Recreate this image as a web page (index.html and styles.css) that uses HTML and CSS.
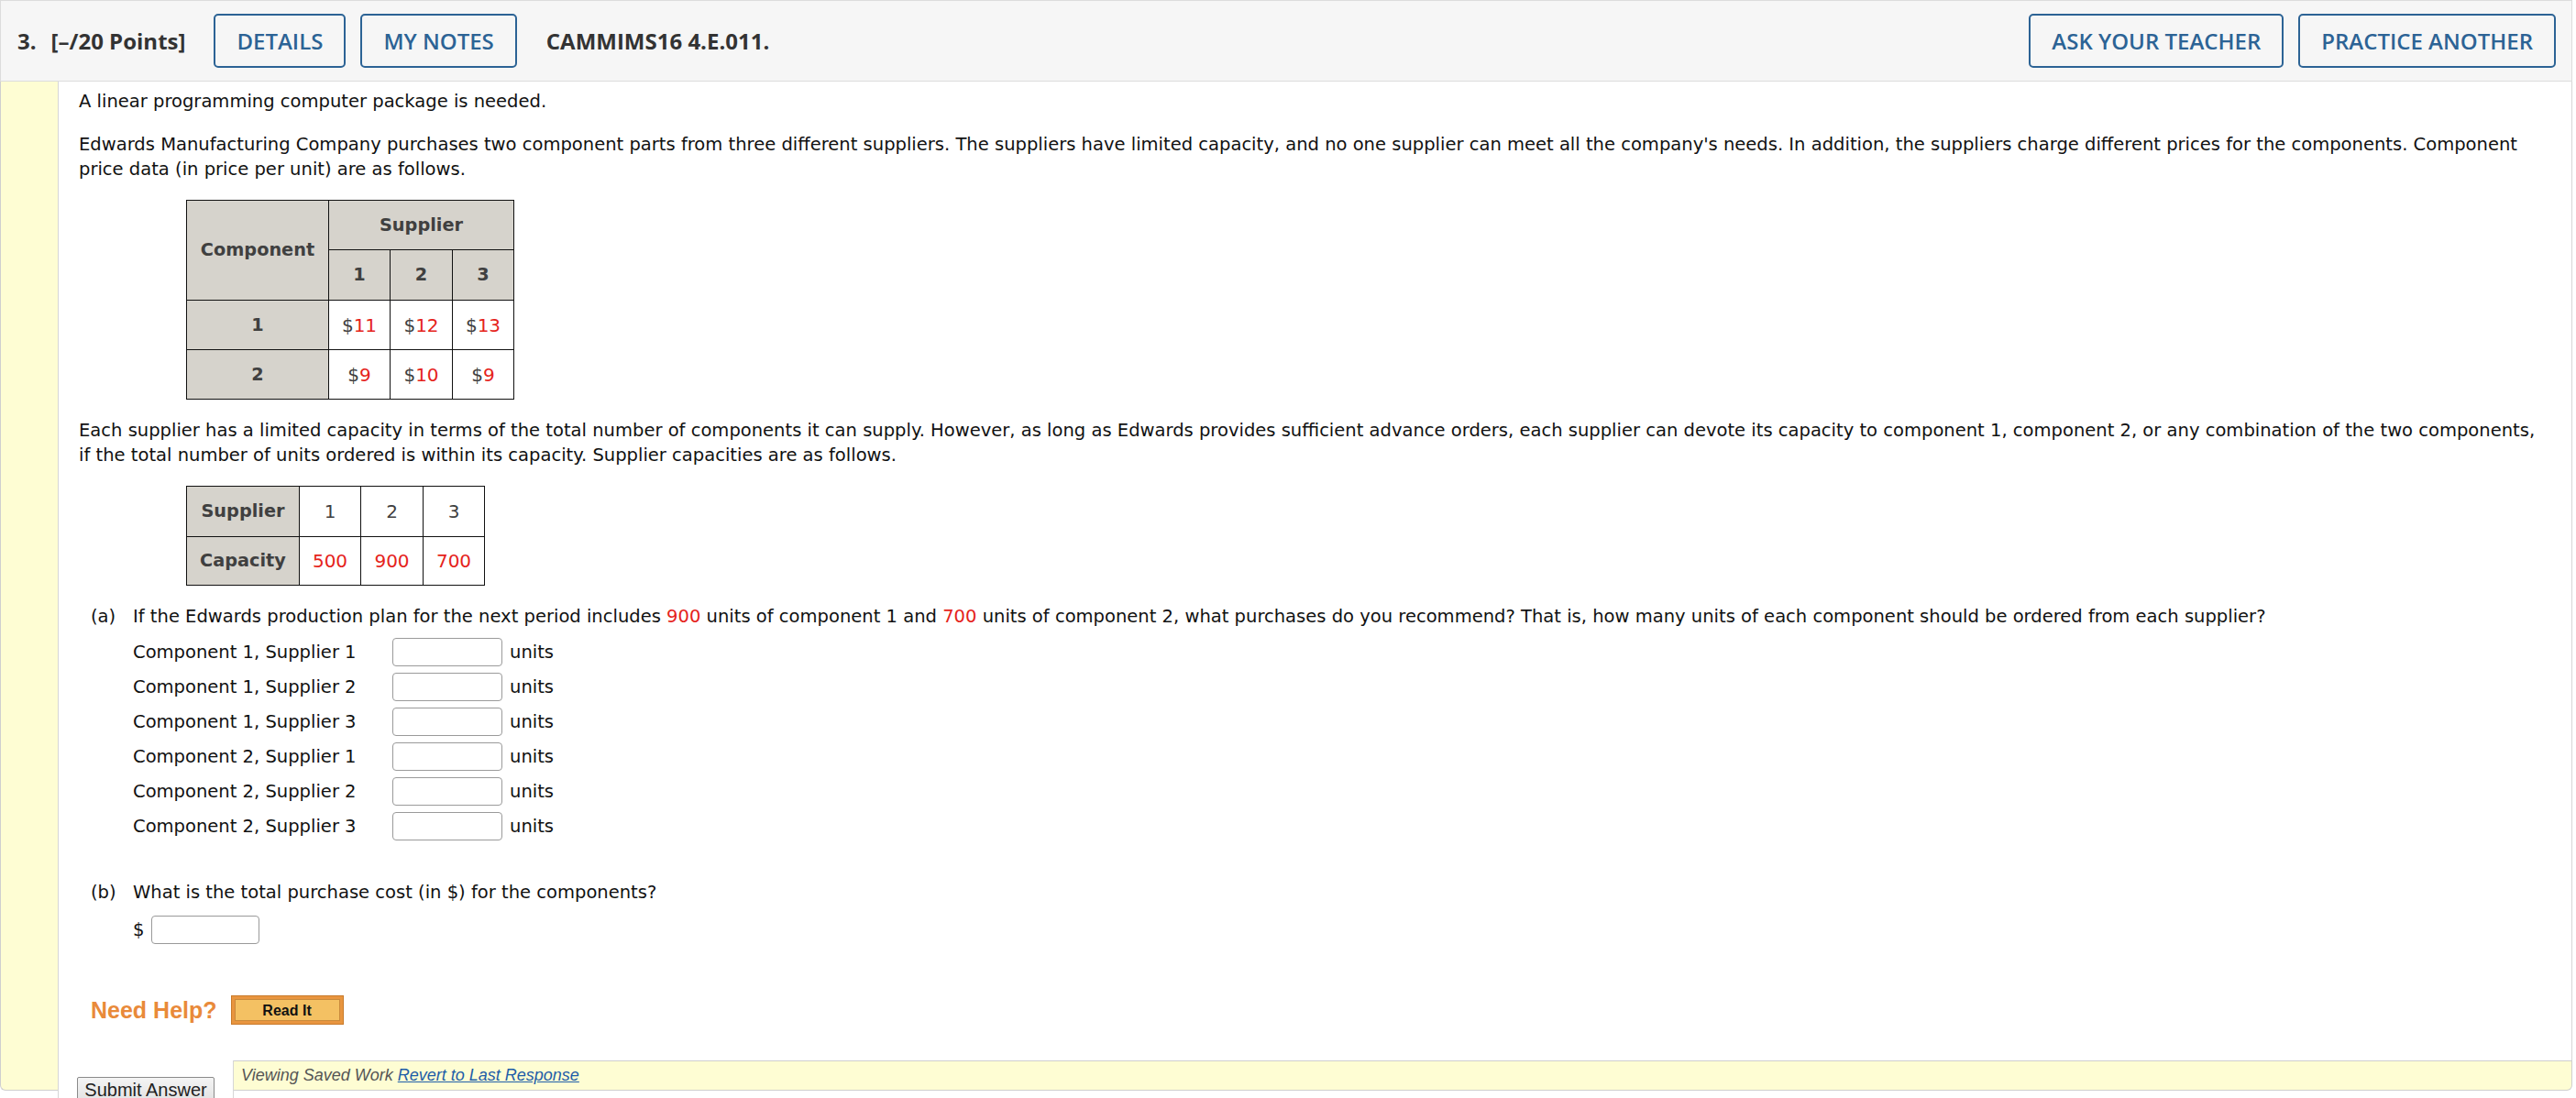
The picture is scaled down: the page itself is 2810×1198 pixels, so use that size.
FILE: index.html
```html
<!DOCTYPE html>
<html>
<head>
<meta charset="utf-8">
<link rel="stylesheet" href="styles.css">
</head>
<body>
<div class="page">
  <header class="qhead">
    <span class="qnum">3.</span><span class="qpts">[–/20 Points]</span>
    <button class="hbtn hbtn-first">DETAILS</button>
    <button class="hbtn">MY NOTES</button>
    <span class="qcode">CAMMIMS16 4.E.011.</span>
    <span class="spacer"></span>
    <button class="hbtn">ASK YOUR TEACHER</button>
    <button class="hbtn">PRACTICE ANOTHER</button>
  </header>
  <div class="panel">
    <div class="strip"></div>
    <div class="main">
      <div class="body">
        <p>A linear programming computer package is needed.</p>
        <p>Edwards Manufacturing Company purchases two component parts from three different suppliers. The suppliers have limited capacity, and no one supplier can meet all the company's needs. In addition, the suppliers charge different prices for the components. Component price data (in price per unit) are as follows.</p>
        <table class="dt dt-price">
          <tr class="r1">
            <th class="c-comp" rowspan="2">Component</th>
            <th colspan="3">Supplier</th>
          </tr>
          <tr class="r2">
            <th class="c-s1">1</th><th class="c-s2">2</th><th class="c-s3">3</th>
          </tr>
          <tr class="r3">
            <th>1</th>
            <td>$<span class="red">11</span></td><td>$<span class="red">12</span></td><td>$<span class="red">13</span></td>
          </tr>
          <tr class="r4">
            <th>2</th>
            <td>$<span class="red">9</span></td><td>$<span class="red">10</span></td><td>$<span class="red">9</span></td>
          </tr>
        </table>
        <p>Each supplier has a limited capacity in terms of the total number of components it can supply. However, as long as Edwards provides sufficient advance orders, each supplier can devote its capacity to component 1, component 2, or any combination of the two components, if the total number of units ordered is within its capacity. Supplier capacities are as follows.</p>
        <table class="dt dt-cap">
          <tr class="q1">
            <th class="c-lab">Supplier</th><td class="c-s1">1</td><td class="c-s2">2</td><td class="c-s3">3</td>
          </tr>
          <tr class="q2">
            <th>Capacity</th><td class="red">500</td><td class="red">900</td><td class="red">700</td>
          </tr>
        </table>
        <div class="part">
          <span class="plabel">(a)</span>
          <div class="ptext">
            <div class="pq">If the Edwards production plan for the next period includes <span class="red">900</span> units of component 1 and <span class="red">700</span> units of component 2, what purchases do you recommend? That is, how many units of each component should be ordered from each supplier?</div>
            <div class="ans-grid">
              <span class="alab">Component 1, Supplier 1</span><input class="inp" type="text"><span class="unit">units</span>
              <span class="alab">Component 1, Supplier 2</span><input class="inp" type="text"><span class="unit">units</span>
              <span class="alab">Component 1, Supplier 3</span><input class="inp" type="text"><span class="unit">units</span>
              <span class="alab">Component 2, Supplier 1</span><input class="inp" type="text"><span class="unit">units</span>
              <span class="alab">Component 2, Supplier 2</span><input class="inp" type="text"><span class="unit">units</span>
              <span class="alab">Component 2, Supplier 3</span><input class="inp" type="text"><span class="unit">units</span>
            </div>
          </div>
        </div>
        <div class="part part-b">
          <span class="plabel">(b)</span>
          <div class="ptext">
            <div class="pq">What is the total purchase cost (in $) for the components?</div>
            <div class="dollar-row"><span class="dsign">$</span><input class="inp inp-b" type="text"></div>
          </div>
        </div>
        <div class="help">
          <span class="needhelp">Need Help?</span>
          <span class="readit"><span class="readit-in">Read It</span></span>
        </div>
      </div>
      <div class="foot">
        <div class="submit-cell"><button class="submit">Submit Answer</button></div>
        <div class="saved">Viewing Saved Work <a class="revert" href="#">Revert to Last Response</a></div>
      </div>
    </div>
  </div>
</div>
</body>
</html>
```

FILE: styles.css
```css
html {
  overflow: hidden;
  background: #ffffff;
}
body {
  margin: 0;
  padding: 0;
  height: 1198px;
  overflow: hidden;
  background: #ffffff;
}
.page {
  width: 2806px;
  font-family: "DejaVu Sans", Verdana, sans-serif;
  font-size: 19.55px;
  color: #111111;
}
.qhead {
  box-sizing: border-box;
  height: 89px;
  display: flex;
  align-items: center;
  padding: 0 17px 0 18px;
  background: #f6f6f6;
  border: 1px solid #dcdcdc;
  font-family: "Open Sans", sans-serif;
  font-size: 24px;
  color: #333333;
}
.qnum {
  font-weight: 700;
  margin-right: 16px;
}
.qpts {
  font-weight: 700;
  margin-right: 31px;
}
.hbtn {
  box-sizing: border-box;
  height: 59px;
  padding: 0 23px;
  margin-right: 16px;
  background: #f6f6f6;
  border: 2px solid #2c6395;
  border-radius: 5px;
  font-family: "Open Sans", sans-serif;
  font-size: 24px;
  font-weight: 600;
  color: #2c6395;
}
.hbtn:last-child {
  margin-right: 0;
}
.qcode {
  font-weight: 700;
  margin-left: 16px;
}
.spacer {
  flex: 1;
}
.panel {
  display: flex;
}
.strip {
  box-sizing: border-box;
  width: 63px;
  flex: none;
  background: #fefdd3;
  border-left: 1px solid #cfcfcf;
  border-bottom: 1px solid #cfcfcf;
  border-bottom-left-radius: 6px;
}
.main {
  flex: 1;
  display: flex;
  flex-direction: column;
}
.body {
  border-left: 1px solid #d6d6d6;
  border-right: 1px solid #d6d6d6;
  padding: 8px 30px 39px 22px;
  line-height: 27px;
}
.body p {
  margin: 0 0 20px;
}
.red {
  color: #e5231b;
}
.dt {
  border-collapse: collapse;
  margin: 0 0 20px 117px;
  line-height: 24px;
}
.dt th, .dt td {
  border: 1px solid #111111;
  padding: 0;
  text-align: center;
  vertical-align: middle;
}
.dt th {
  background: #d6d3cc;
  color: #404040;
  font-weight: 700;
  font-size: 19.3px;
}
.dt td {
  background: #ffffff;
  color: #404040;
  font-size: 20px;
}
.dt td.red {
  color: #e5231b;
}
.dt-price .c-comp { width: 154px; }
.dt-price .c-s1 { width: 66px; }
.dt-price .c-s2 { width: 67px; }
.dt-price .c-s3 { width: 66px; }
.dt-price .r1 th, .dt-price .r1 td { height: 53px; }
.dt-price .r2 th, .dt-price .r2 td { height: 54px; }
.dt-price .r3 th, .dt-price .r3 td { height: 53px; }
.dt-price .r4 th, .dt-price .r4 td { height: 53px; }
.dt-cap .c-lab { width: 122px; }
.dt-cap .c-s1 { width: 66px; }
.dt-cap .c-s2 { width: 67px; }
.dt-cap .c-s3 { width: 66px; }
.dt-cap .q1 th, .dt-cap .q1 td { height: 54px; }
.dt-cap .q2 th, .dt-cap .q2 td { height: 52px; }
.part {
  display: flex;
  margin-left: 13px;
}
.plabel {
  width: 46px;
  flex: none;
}
.ptext {
  flex: 1;
}
.ans-grid {
  display: grid;
  grid-template-columns: 283px 120px auto;
  grid-auto-rows: 38px;
  align-items: center;
  margin-top: 6px;
}
.unit {
  margin-left: 8px;
}
.inp {
  box-sizing: border-box;
  width: 120px;
  height: 31px;
  border: 1px solid #9a9a9a;
  border-radius: 4px;
  background: #ffffff;
  margin: 0;
  padding: 0 4px;
  font-size: 18px;
}
.part-b {
  margin-top: 40px;
}
.dollar-row {
  display: flex;
  align-items: center;
  margin-top: 11px;
  height: 32px;
}
.dsign {
  width: 20px;
}
.inp-b {
  width: 118px;
}
.help {
  display: flex;
  align-items: center;
  margin: 56px 0 0 13px;
}
.needhelp {
  font-family: "Liberation Sans", Arial, sans-serif;
  font-weight: 700;
  font-size: 25px;
  color: #e98a3a;
  margin-right: 15px;
}
.readit {
  box-sizing: border-box;
  width: 123px;
  height: 32px;
  background: #e8953f;
  border: 1px solid #c97a2a;
  padding: 3px;
  display: flex;
}
.readit-in {
  flex: 1;
  display: flex;
  align-items: center;
  justify-content: center;
  background: #f4c163;
  border: 1px solid #c98a3b;
  font-family: "Liberation Sans", Arial, sans-serif;
  font-weight: 700;
  font-size: 16px;
  color: #111111;
}
.foot {
  display: flex;
  align-items: flex-start;
}
.submit-cell {
  box-sizing: border-box;
  width: 192px;
  height: 64px;
  margin-bottom: -31px;
  flex: none;
  border-left: 1px solid #d6d6d6;
  border-right: 1px solid #d6d6d6;
  padding: 18px 0 0 20px;
}
.submit {
  box-sizing: border-box;
  width: 150px;
  height: 34px;
  padding: 0 0 5px;
  border: 1px solid #8a8a8a;
  border-radius: 2px;
  background: linear-gradient(#f4f4f4, #dedede);
  font-family: "Liberation Sans", Arial, sans-serif;
  font-size: 20px;
  color: #222222;
}
.saved {
  box-sizing: border-box;
  flex: 1;
  height: 33px;
  background: #fefdd3;
  border-top: 1px solid #cfcfcf;
  border-right: 1px solid #cfcfcf;
  border-bottom: 1px solid #cfcfcf;
  border-bottom-right-radius: 6px;
  padding-left: 8px;
  display: flex;
  align-items: center;
  font-family: "Liberation Sans", Arial, sans-serif;
  font-style: italic;
  font-size: 18px;
  color: #555555;
  white-space: pre;
}
.revert {
  color: #1f5ea8;
  text-decoration: underline;
}
```
